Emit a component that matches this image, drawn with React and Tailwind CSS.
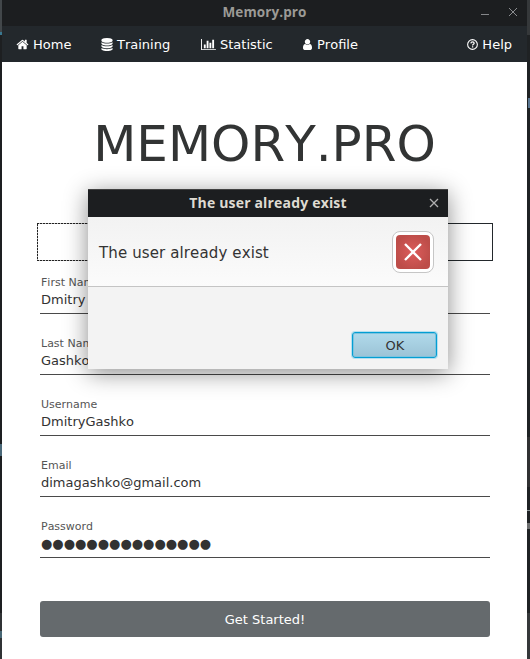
import React from "react";

const HOME =
  "M1472 992v480q0 26-19 45t-45 19h-384v-384h-256v384h-384q-26 0-45-19t-19-45v-480q0-1 .5-3t.5-3l575-474 575 474q1 2 1 6zm223-69l-62 74q-8 9-21 11h-3q-13 0-21-7l-692-577-692 577q-12 8-24 7-13-2-21-11l-62-74q-8-10-7-23.5t11-21.5l719-599q32-26 76-26t76 26l244 204v-195q0-14 9-23t23-9h192q14 0 23 9t9 23v408l219 182q10 8 11 21.5t-7 23.5z";
const DATABASE =
  "M896 768q237 0 443-43t325-127v170q0 69-103 128t-280 93.5-385 34.5-385-34.5-280-93.5-103-128v-170q119 84 325 127t443 43zm0 768q237 0 443-43t325-127v170q0 69-103 128t-280 93.5-385 34.5-385-34.5-280-93.5-103-128v-170q119 84 325 127t443 43zm0-384q237 0 443-43t325-127v170q0 69-103 128t-280 93.5-385 34.5-385-34.5-280-93.5-103-128v-170q119 84 325 127t443 43zm0-1152q208 0 385 34.5t280 93.5 103 128v128q0 69-103 128t-280 93.5-385 34.5-385-34.5-280-93.5-103-128v-128q0-69 103-128t280-93.5 385-34.5z";
const CHART =
  "M640 896v512h-256v-512h256zm384-512v1024h-256v-1024h256zm1024 1152v128h-2048v-1536h128v1408h1920zm-640-896v768h-256v-768h256zm384-384v1152h-256v-1152h256z";
const USER =
  "M1536 1399q0 109-62.5 187t-150.5 78h-854q-88 0-150.5-78t-62.5-187q0-85 8.5-160.5t31.5-152 58.5-131 94-89 134.5-34.5q131 128 313 128t313-128q76 0 134.5 34.5t94 89 58.5 131 31.5 152 8.5 160.5zm-256-887q0 159-112.5 271.5t-271.5 112.5-271.5-112.5-112.5-271.5 112.5-271.5 271.5-112.5 271.5 112.5 112.5 271.5z";

function NavItem({ viewBox, d, iconClass, className, children }) {
  return (
    <a className={`flex items-center whitespace-nowrap ${className}`}>
      <svg viewBox={viewBox} className={`shrink-0 fill-white ${iconClass}`}>
        <path d={d} />
      </svg>
      <span className="pt-px">{children}</span>
    </a>
  );
}

function Cross({ className }) {
  return (
    <svg viewBox="0 0 10 10" className={className} fill="none">
      <path d="M1 1L9 9M9 1L1 9" />
    </svg>
  );
}

function Field({ label, value }) {
  return (
    <div className="flex h-[61px] flex-col border-b border-[#4a4a4a] pl-px pt-[22px]">
      <label className="h-[15px] text-[11px] leading-[15px] text-[#555]">{label}</label>
      <div className="mt-px h-[18px] whitespace-nowrap text-[13px] leading-[18px] text-[#323232]">
        {value}
      </div>
    </div>
  );
}

function Dialog() {
  return (
    <div className="absolute left-[88px] top-[189px] flex h-[180px] w-[360px] flex-col bg-[#f3f3f3] shadow-[0_4px_22px_0px_rgba(0,0,0,0.45)]">
      <div className="relative flex h-7 shrink-0 items-center justify-center border-t border-[#414141] bg-[#1c1e20] pb-[2px] font-['Open_Sans','Noto_Sans',sans-serif] text-[14px] font-bold tracking-[0.18px] text-[#dfdbd2]">
        The user already exist
        <Cross className="absolute right-[9px] top-[8px] size-[10px] stroke-[#b0b0b0] stroke-[1.3]" />
      </div>
      <div className="flex h-[70px] shrink-0 items-center justify-between border-b border-[#c4c4c4] bg-gradient-to-b from-[#f2f2f2] to-[#fbfbfb] pl-[11px] pr-[14px]">
        <span className="pt-[3px] text-[15px] tracking-[0.12px] text-[#333]">The user already exist</span>
        <div className="flex size-[42px] items-center justify-center rounded-[8px] border border-[#c6c6c6] bg-white">
          <div className="flex size-[34px] items-center justify-center rounded-[4px] bg-[radial-gradient(circle,#dc5c5b,#bd4d49_75%)]">
            <Cross className="size-[20px] stroke-white stroke-[1.2]" />
          </div>
        </div>
      </div>
      <div className="flex flex-1 items-end justify-end pb-[11px] pr-[11px]">
        <button className="h-[26px] w-[85px] rounded-[3px] border border-[#039ed3] bg-gradient-to-b from-[#b1daeb] to-[#9bc3d6] pl-px pt-px text-[13px] leading-[23px] text-[#333] shadow-[0_0_0_1px_#b5dfef,inset_0_0_0_1px_#7dc3de]">
          OK
        </button>
      </div>
    </div>
  );
}

export default function App() {
  return (
    <div className="relative flex h-[659px] w-[530px] overflow-hidden bg-[#232628] font-['DejaVu_Sans',sans-serif] text-[13px] [font-kerning:none]">
      <div className="flex w-[2px] shrink-0 flex-col bg-[#1d1f21]">
        <div className="h-8 bg-[#42474a]" />
        <div className="h-[3px] bg-[#397790]" />
        <div className="mt-[409px] h-[12px] bg-[#496878]" />
        <div className="mt-[157px] h-[18px] bg-[#303335]" />
        <div className="h-[7px] bg-[#476674]" />
        <div className="flex-1 bg-[#303335]" />
      </div>
      <div className="flex w-[525px] shrink-0 flex-col bg-white">
        <div className="relative flex h-[26px] shrink-0 items-center justify-center bg-[#1c1e20] pb-[2px] font-['Open_Sans','Noto_Sans',sans-serif] text-[13.5px] font-bold tracking-[0.1px] text-[#9b9a96]">
          Memory.pro
          <div className="absolute right-[38px] top-[14px] h-px w-2 bg-[#85878a]" />
          <Cross className="absolute right-[9px] top-[7px] size-[10px] stroke-[#8b8d90] stroke-1" />
        </div>
        <nav className="flex h-9 shrink-0 items-center bg-[#23282c] pl-[14px] pr-[16px] text-white">
          <NavItem viewBox="0 0 1792 1792" d={HOME} iconClass="size-[13px]" className="w-[85px] gap-[4px]">Home</NavItem>
          <NavItem viewBox="128 0 1536 1792" d={DATABASE} iconClass="h-[13px] w-[12px]" className="w-[100px] gap-[4px]">Training</NavItem>
          <NavItem viewBox="0 0 2048 1792" d={CHART} iconClass="h-[13px] w-[15px]" className="w-[102px] gap-[4px]">Statistic</NavItem>
          <NavItem viewBox="256 0 1280 1792" d={USER} iconClass="h-[13px] w-[9px]" className="gap-[5px]">Profile</NavItem>
          <a className="ml-auto flex items-center gap-[4px]">
            <svg viewBox="0 0 12 12" className="size-[11px]" fill="none" stroke="white">
              <circle cx="6" cy="6" r="5.3" strokeWidth="1.2" />
              <path d="M4.2 4.7C4.4 3.5 5.1 3.2 6 3.2C7 3.2 7.8 3.8 7.8 4.7C7.8 5.8 6.1 5.8 6.1 7.1M6.1 7.9V9.2" strokeWidth="1.4" />
            </svg>
            <span className="-mr-px pt-px">Help</span>
          </a>
        </nav>
        <h1 className="mt-[52px] h-[60px] text-center text-[50px] leading-[60px] text-[#323434]">MEMORY.PRO</h1>
        <div className="ml-[35px] mt-[49px] flex h-[38px] w-[456px] shrink-0">
          <div className="flex flex-1 flex-col">
            <div className="h-px bg-[repeating-linear-gradient(90deg,#222_0_2px,#bbb_2px_3px)]" />
            <div className="w-px flex-1 bg-[repeating-linear-gradient(180deg,#222_0_2px,#bbb_2px_3px)]" />
            <div className="h-px bg-[repeating-linear-gradient(90deg,#222_0_2px,#bbb_2px_3px)]" />
          </div>
          <div className="flex-1 border border-[#23282c]" />
        </div>
        <div className="-mt-[8px] ml-[38px] w-[450px]">
          <Field label="First Name" value="Dmitry" />
          <Field label="Last Name" value="Gashko" />
          <Field label="Username" value="DmitryGashko" />
          <Field label="Email" value="dimagashko@gmail.com" />
          <Field label="Password" value="●●●●●●●●●●●●●●●" />
        </div>
        <button className="ml-[38px] mt-[43px] h-9 w-[450px] shrink-0 rounded-[3px] bg-[#656a6d] pt-px text-[13px] text-white">
          Get Started!
        </button>
      </div>
      <div className="flex w-[3px] shrink-0 flex-col bg-[#1f2224]">
        <div className="h-[35px] bg-[#35383a]" />
        <div className="mt-[63px] h-[10px] w-[2px] self-end bg-[#5a7691]" />
        <div className="mt-[329px] h-[50px] bg-[#303132]" />
        <div className="mt-[23px] h-px bg-[#8a9495]" />
        <div className="mt-[12px] h-[6px] bg-[#6b6d6e]" />
        <div className="mt-[84px] flex-1 bg-[#35383a]" />
      </div>
      <Dialog />
    </div>
  );
}
